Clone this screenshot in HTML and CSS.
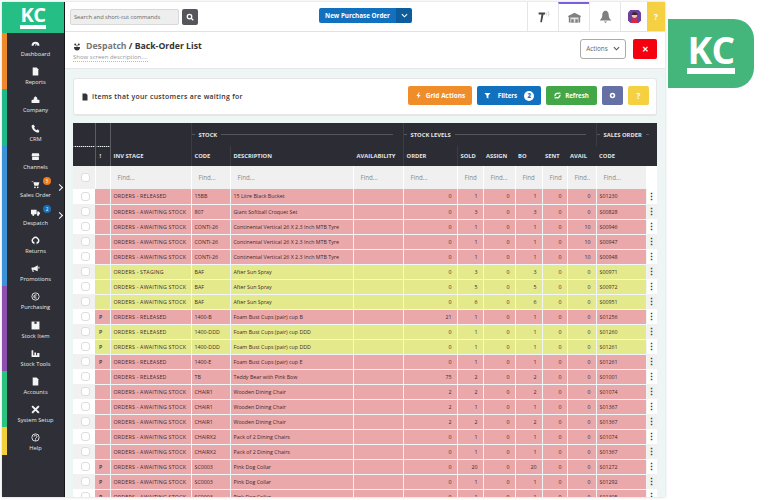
FILE: index.html
```html
<!DOCTYPE html>
<html lang="en">
<head>
    <meta charset="UTF-8">
    <title>Back-Order List</title>
    <link rel="stylesheet" href="styles.css">
</head>
<body>
    <svg class="defs" width="0" height="0">
        <symbol id="i-gauge" viewBox="0 0 16 16"><path d="M1 12a7 7 0 0 1 14 0h-3.500a3.500 3.500 0 0 0-7 0z"/><path d="M7 11l4-5-2 6z"/></symbol>
        <symbol id="i-file" viewBox="0 0 16 16"><path d="M3 1h7l3 3v11H3z"/></symbol>
        <symbol id="i-company" viewBox="0 0 16 16"><path d="M1 14V9l4-1V5l3-3 3 3v3l4 1v5z"/></symbol>
        <symbol id="i-plant" viewBox="0 0 16 16"><path d="M2 8h12c0 4-2 7-6 7s-6-3-6-7z"/><path d="M7 7V4h2v3z"/><circle cx="4.500" cy="3" r="2"/><circle cx="11.500" cy="3" r="2"/></symbol>
        <symbol id="i-phone" viewBox="0 0 16 16"><path d="M4 1l3 3.500-1.500 2c1 2 2.500 3.500 4.500 4.500l2-1.500 3 3-2 3C7 15 1 9 1 3z"/></symbol>
        <symbol id="i-shop" viewBox="0 0 16 16"><path d="M2 2h12l1 5H1zM2 8h12v6H2z"/></symbol>
        <symbol id="i-cart" viewBox="0 0 16 16"><path d="M1 2h3l.500 2H15l-2 6H6L4 3H1z"/><circle cx="7" cy="13" r="1.500"/><circle cx="12" cy="13" r="1.500"/></symbol>
        <symbol id="i-truck" viewBox="0 0 16 16"><path d="M0 3h10v8H0zM11 6h3l2 3v2h-5z"/><circle cx="4" cy="12" r="2"/><circle cx="12.500" cy="12" r="2"/></symbol>
        <symbol id="i-return" viewBox="0 0 16 16"><path d="M4 12a5.500 5.500 0 1 1 8 0" fill="none" stroke="currentColor" stroke-width="2.500"/><path d="M1 10h5v5zM15 10h-5v5z"/></symbol>
        <symbol id="i-megaphone" viewBox="0 0 16 16"><path d="M1 6h4l7-4v11L5 10H4l1 4H3l-1-4H1z"/><path d="M13 5h2v3h-2z"/></symbol>
        <symbol id="i-euro" viewBox="0 0 16 16"><circle cx="8" cy="8" r="6.500" fill="none" stroke="currentColor" stroke-width="1.500"/><path d="M10.500 5.500a3.200 3.200 0 1 0 0 5M4.500 7h4.500M4.500 9h4.500" fill="none" stroke="currentColor" stroke-width="1.200"/></symbol>
        <symbol id="i-box" viewBox="0 0 16 16"><path d="M1 1h14v14H1z"/><path d="M6 1h4v4H6z" fill="#2e2f37"/></symbol>
        <symbol id="i-chart" viewBox="0 0 16 16"><path d="M1 2h3v9h2V6h3v5h2V7h4v7H1z"/></symbol>
        <symbol id="i-tools" viewBox="0 0 16 16"><path d="M2 2l12 12M14 2L2 14" fill="none" stroke="currentColor" stroke-width="3.500"/></symbol>
        <symbol id="i-help" viewBox="0 0 16 16"><circle cx="8" cy="8" r="6.500" fill="none" stroke="currentColor" stroke-width="1.500"/><path d="M5.500 6.500a2.500 2.500 0 1 1 3.500 2.300c-.700.400-1 .700-1 1.700" fill="none" stroke="currentColor" stroke-width="1.500"/><path d="M7 11.500h2v2H7z"/></symbol>
        <symbol id="i-bolt" viewBox="0 0 16 16"><path d="M9 1L3 9h4l-1 6 7-8H8l3-6z"/></symbol>
        <symbol id="i-funnel" viewBox="0 0 16 16"><path d="M1 2h14L10 8v7l-4-2V8z"/></symbol>
        <symbol id="i-refresh" viewBox="0 0 16 16"><path d="M2.500 9.500a5.700 5.700 0 0 1 9-5.500M13.500 6.500a5.700 5.700 0 0 1-9 5.500" fill="none" stroke="currentColor" stroke-width="3"/><path d="M10 1h4.500v4.500zM6 15H1.500v-4.500z"/></symbol>
        <symbol id="i-gear" viewBox="0 0 16 16"><circle cx="8" cy="8" r="4.500" fill="none" stroke="currentColor" stroke-width="3.500"/></symbol>
        <symbol id="i-search" viewBox="0 0 16 16"><circle cx="7" cy="7" r="4.500" fill="none" stroke="currentColor" stroke-width="2.500"/><path d="M10 10l4.500 4.500" stroke="currentColor" stroke-width="2.500"/></symbol>
        <symbol id="i-chevron" viewBox="0 0 16 16"><path d="M2 5l6 6 6-6" fill="none" stroke="currentColor" stroke-width="2.500"/></symbol>
    </svg>

    <div class="page">
        <div class="app">
            <aside class="sidebar">
                <div class="brand">
                    <div class="kc kc-small"><span>KC</span><i></i></div>
                </div>
                <nav class="nav">
                    <a class="nav-item orange"><svg><use href="#i-gauge"/></svg>Dashboard</a>
                    <a class="nav-item orange"><svg><use href="#i-file"/></svg>Reports</a>
                    <a class="nav-item teal"><svg><use href="#i-company"/></svg>Company</a>
                    <a class="nav-item teal"><svg><use href="#i-phone"/></svg>CRM</a>
                    <a class="nav-item blue"><svg><use href="#i-shop"/></svg>Channels</a>
                    <a class="nav-item blue has-sub"><svg><use href="#i-cart"/></svg>Sales Order<b class="count count-orange">5</b></a>
                    <a class="nav-item blue has-sub"><svg><use href="#i-truck"/></svg>Despatch<b class="count count-blue">2</b></a>
                    <a class="nav-item blue"><svg><use href="#i-return"/></svg>Returns</a>
                    <a class="nav-item blue"><svg><use href="#i-megaphone"/></svg>Promotions</a>
                    <a class="nav-item purple"><svg><use href="#i-euro"/></svg>Purchasing</a>
                    <a class="nav-item purple"><svg><use href="#i-box"/></svg>Stock Item</a>
                    <a class="nav-item purple"><svg><use href="#i-chart"/></svg>Stock Tools</a>
                    <a class="nav-item green"><svg><use href="#i-file"/></svg>Accounts</a>
                    <a class="nav-item green"><svg><use href="#i-tools"/></svg>System Setup</a>
                    <a class="nav-item yellow"><svg><use href="#i-help"/></svg>Help</a>
                </nav>
            </aside>

            <main class="main">
                <header class="topbar">
                    <div class="search">
                        <div class="search-input">Search and short-cut commands</div>
                        <div class="search-btn"><svg><use href="#i-search"/></svg></div>
                    </div>
                    <div class="new-order">
                        <span class="new-order-label">New Purchase Order</span>
                        <span class="new-order-drop"><svg><use href="#i-chevron"/></svg></span>
                    </div>
                    <div class="tabs">
                        <div class="tab">
                            <svg viewBox="0 0 16 16"><path d="M2 3h8v2.500H8L6 15H4l1.500-9.500H2z" fill="#444"/><path d="M11.500 3a3 3 0 0 1 0 3.500M13.500 1.500a5 5 0 0 1 0 6.500" fill="none" stroke="#c4c4c4"/></svg>
                        </div>
                        <div class="tab tab-active">
                            <svg viewBox="0 0 16 16"><path d="M0 6l8-4 8 4v1h-1v7H1V7H0z" fill="#808080"/><path d="M3 8h10v6H3z" fill="#e4e4e4"/><path d="M4 10h3v4H4zM9 10h3v4H9z" fill="#808080"/></svg>
                        </div>
                        <div class="tab">
                            <svg viewBox="0 0 16 16"><path d="M8 1c3 0 4 3 4 6s2 4 3 6H1c1-2 3-3 3-6s1-6 4-6z" fill="#808080"/><path d="M6 14h4l-2 2z" fill="#808080"/></svg>
                        </div>
                        <div class="tab tab-avatar">
                            <svg viewBox="0 0 16 16"><path d="M0 3l3-3h10l3 3v10l-3 3H3l-3-3z" fill="#6f3fa0"/><circle cx="8" cy="6.500" r="3.200" fill="#f2c6a8"/><path d="M4.500 6a3.500 3.500 0 0 1 7 0z" fill="#3a2a2a"/><path d="M4 16l.500-5.500h7l.500 5.500z" fill="#d8283c"/></svg>
                        </div>
                        <div class="tab-help">?</div>
                    </div>
                </header>

                <section class="title-bar">
                    <div class="title-text">
                        <h1><svg><use href="#i-plant"/></svg><span class="crumb">Despatch</span> / Back-Order List</h1>
                        <a class="show-desc">Show screen description....</a>
                    </div>
                    <div class="actions-btn">Actions <svg><use href="#i-chevron"/></svg></div>
                    <div class="close-btn">&#10005;</div>
                </section>

                <section class="content">
                    <div class="card">
                        <svg class="card-icon"><use href="#i-file"/></svg>
                        <span class="card-text">Items that your customers are waiting for</span>
                        <div class="card-buttons">
                            <div class="btn btn-orange btn-grid"><svg><use href="#i-bolt"/></svg>Grid Actions</div>
                            <div class="btn btn-blue btn-filters"><svg><use href="#i-funnel"/></svg>Filters<b class="filter-count">2</b></div>
                            <div class="btn btn-green btn-refresh"><svg><use href="#i-refresh"/></svg>Refresh</div>
                            <div class="btn btn-slate btn-square"><svg><use href="#i-gear"/></svg></div>
                            <div class="btn btn-yellow btn-square">?</div>
                        </div>
                    </div>

                    <table class="grid">
                        <colgroup>
                            <col class="c-check"><col class="c-flag"><col class="c-stage"><col class="c-code"><col class="c-desc"><col class="c-avail"><col class="c-order"><col class="c-sold"><col class="c-assign"><col class="c-bo"><col class="c-sent"><col class="c-free"><col class="c-so"><col class="c-menu">
                        </colgroup>
                        <thead>
                            <tr class="group-row">
                                <th class="dash"></th>
                                <th class="dash"></th>
                                <th></th>
                                <th colspan="3"><div class="group"><i class="short"></i><span>STOCK</span><i></i></div></th>
                                <th colspan="6"><div class="group"><i class="short"></i><span>STOCK LEVELS</span><i></i></div></th>
                                <th colspan="2"><div class="group"><i class="short"></i><span>SALES ORDER</span><i class="short"></i></div></th>
                            </tr>
                            <tr class="head-row">
                                <th></th><th class="bang">!</th><th>INV STAGE</th><th>CODE</th><th>DESCRIPTION</th><th>AVAILABILITY</th><th>ORDER</th><th>SOLD</th><th>ASSIGN</th><th>BO</th><th>SENT</th><th>AVAIL</th><th>CODE</th><th></th>
                            </tr>
                            <tr class="find-row">
                                <td><span class="check"></span></td><td></td><td>Find...</td><td>Find...</td><td>Find...</td><td>Find...</td><td>Find...</td><td>Find</td><td>Find...</td><td>Find</td><td>Find</td><td>Find..</td><td>Find...</td><td class="menu"></td>
                            </tr>
                        </thead>
                        <tbody>
                            <tr class="red"><td><span class="check"></span></td><td></td><td>ORDERS - RELEASED</td><td>15BB</td><td>15 Litre Black Bucket</td><td></td><td>0</td><td>1</td><td>0</td><td>1</td><td>0</td><td>0</td><td>S01230</td><td class="menu">&#8942;</td></tr>
                            <tr class="red"><td><span class="check"></span></td><td></td><td>ORDERS - AWAITING STOCK</td><td>807</td><td>Giant Softball Croquet Set</td><td></td><td>0</td><td>3</td><td>0</td><td>3</td><td>0</td><td>0</td><td>S00828</td><td class="menu">&#8942;</td></tr>
                            <tr class="red"><td><span class="check"></span></td><td></td><td>ORDERS - AWAITING STOCK</td><td>CONTI-26</td><td>Continental Vertical 26 X 2.3 Inch MTB Tyre</td><td></td><td>0</td><td>1</td><td>0</td><td>1</td><td>0</td><td>10</td><td>S00946</td><td class="menu">&#8942;</td></tr>
                            <tr class="red"><td><span class="check"></span></td><td></td><td>ORDERS - AWAITING STOCK</td><td>CONTI-26</td><td>Continental Vertical 26 X 2.3 Inch MTB Tyre</td><td></td><td>0</td><td>1</td><td>0</td><td>1</td><td>0</td><td>10</td><td>S00947</td><td class="menu">&#8942;</td></tr>
                            <tr class="red"><td><span class="check"></span></td><td></td><td>ORDERS - AWAITING STOCK</td><td>CONTI-26</td><td>Continental Vertical 26 X 2.3 Inch MTB Tyre</td><td></td><td>0</td><td>1</td><td>0</td><td>1</td><td>0</td><td>10</td><td>S00948</td><td class="menu">&#8942;</td></tr>
                            <tr class="lime"><td><span class="check"></span></td><td></td><td>ORDERS - STAGING</td><td>BAF</td><td>After Sun Spray</td><td></td><td>0</td><td>3</td><td>0</td><td>3</td><td>0</td><td>0</td><td>S00971</td><td class="menu">&#8942;</td></tr>
                            <tr class="lime"><td><span class="check"></span></td><td></td><td>ORDERS - AWAITING STOCK</td><td>BAF</td><td>After Sun Spray</td><td></td><td>0</td><td>5</td><td>0</td><td>5</td><td>0</td><td>0</td><td>S00972</td><td class="menu">&#8942;</td></tr>
                            <tr class="lime"><td><span class="check"></span></td><td></td><td>ORDERS - AWAITING STOCK</td><td>BAF</td><td>After Sun Spray</td><td></td><td>0</td><td>6</td><td>0</td><td>6</td><td>0</td><td>0</td><td>S00951</td><td class="menu">&#8942;</td></tr>
                            <tr class="red"><td><span class="check"></span></td><td>P</td><td>ORDERS - RELEASED</td><td>1400-B</td><td>Foam Bust Cups (pair) cup B</td><td></td><td>21</td><td>1</td><td>0</td><td>1</td><td>0</td><td>0</td><td>S01256</td><td class="menu">&#8942;</td></tr>
                            <tr class="lime"><td><span class="check"></span></td><td>P</td><td>ORDERS - RELEASED</td><td>1400-DDD</td><td>Foam Bust Cups (pair) cup DDD</td><td></td><td>0</td><td>1</td><td>0</td><td>1</td><td>0</td><td>0</td><td>S01260</td><td class="menu">&#8942;</td></tr>
                            <tr class="lime"><td><span class="check"></span></td><td>P</td><td>ORDERS - AWAITING STOCK</td><td>1400-DDD</td><td>Foam Bust Cups (pair) cup DDD</td><td></td><td>0</td><td>1</td><td>0</td><td>1</td><td>0</td><td>0</td><td>S01261</td><td class="menu">&#8942;</td></tr>
                            <tr class="red"><td><span class="check"></span></td><td>P</td><td>ORDERS - RELEASED</td><td>1400-E</td><td>Foam Bust Cups (pair) cup E</td><td></td><td>0</td><td>1</td><td>0</td><td>1</td><td>0</td><td>0</td><td>S01261</td><td class="menu">&#8942;</td></tr>
                            <tr class="red"><td><span class="check"></span></td><td></td><td>ORDERS - RELEASED</td><td>TB</td><td>Teddy Bear with Pink Bow</td><td></td><td>75</td><td>2</td><td>0</td><td>2</td><td>0</td><td>0</td><td>S01001</td><td class="menu">&#8942;</td></tr>
                            <tr class="red"><td><span class="check"></span></td><td></td><td>ORDERS - AWAITING STOCK</td><td>CHAIR1</td><td>Wooden Dining Chair</td><td></td><td>2</td><td>2</td><td>0</td><td>2</td><td>0</td><td>0</td><td>S01074</td><td class="menu">&#8942;</td></tr>
                            <tr class="red"><td><span class="check"></span></td><td></td><td>ORDERS - AWAITING STOCK</td><td>CHAIR1</td><td>Wooden Dining Chair</td><td></td><td>2</td><td>1</td><td>0</td><td>1</td><td>0</td><td>0</td><td>S01367</td><td class="menu">&#8942;</td></tr>
                            <tr class="red"><td><span class="check"></span></td><td></td><td>ORDERS - AWAITING STOCK</td><td>CHAIR1</td><td>Wooden Dining Chair</td><td></td><td>2</td><td>2</td><td>0</td><td>2</td><td>0</td><td>0</td><td>S01367</td><td class="menu">&#8942;</td></tr>
                            <tr class="red"><td><span class="check"></span></td><td></td><td>ORDERS - AWAITING STOCK</td><td>CHAIRX2</td><td>Pack of 2 Dining Chairs</td><td></td><td>0</td><td>1</td><td>0</td><td>1</td><td>0</td><td>0</td><td>S01074</td><td class="menu">&#8942;</td></tr>
                            <tr class="red"><td><span class="check"></span></td><td></td><td>ORDERS - AWAITING STOCK</td><td>CHAIRX2</td><td>Pack of 2 Dining Chairs</td><td></td><td>0</td><td>1</td><td>0</td><td>1</td><td>0</td><td>0</td><td>S01367</td><td class="menu">&#8942;</td></tr>
                            <tr class="red"><td><span class="check"></span></td><td>P</td><td>ORDERS - AWAITING STOCK</td><td>SC0003</td><td>Pink Dog Collar</td><td></td><td>0</td><td>20</td><td>0</td><td>20</td><td>0</td><td>0</td><td>S01272</td><td class="menu">&#8942;</td></tr>
                            <tr class="red"><td><span class="check"></span></td><td>P</td><td>ORDERS - AWAITING STOCK</td><td>SC0003</td><td>Pink Dog Collar</td><td></td><td>0</td><td>1</td><td>0</td><td>1</td><td>0</td><td>0</td><td>S01292</td><td class="menu">&#8942;</td></tr>
                            <tr class="red"><td><span class="check"></span></td><td>P</td><td>ORDERS - AWAITING STOCK</td><td>SC0003</td><td>Pink Dog Collar</td><td></td><td>0</td><td>1</td><td>0</td><td>1</td><td>0</td><td>0</td><td>S01305</td><td class="menu">&#8942;</td></tr>
                        </tbody>
                    </table>
                </section>
            </main>
        </div>

        <div class="badge">
            <div class="kc kc-large"><span>KC</span><i></i></div>
        </div>
    </div>
</body>
</html>
```

FILE: styles.css
```css
* {
    box-sizing: border-box;
}
html, body {
    margin: 0;
    padding: 0;
    background-color: #ffffff;
    overflow: hidden;
}
body {
    font-family: "Open Sans", "Liberation Sans", sans-serif;
    color: #333333;
}
.defs {
    display: block;
    height: 0;
}
.page {
    display: flex;
    align-items: flex-start;
    width: 784px;
    height: 500px;
    padding: 2px 0 0 2px;
    overflow: hidden;
}
.app {
    display: flex;
    flex: none;
    width: 663px;
    height: 495px;
    overflow: hidden;
    box-shadow: 0 0 3px rgba(0, 0, 0, 0.2);
}

/* big logo on the right */
.badge {
    flex: none;
    display: flex;
    align-items: center;
    justify-content: center;
    width: 86px;
    height: 69px;
    margin: 17px 0 0 3px;
    background-color: #44b67b;
    border-radius: 0 20px 20px 0;
}
.kc {
    display: flex;
    flex-direction: column;
    align-items: stretch;
    color: #ffffff;
    font-weight: 700;
}
.kc span {
    display: block;
}
.kc i {
    display: block;
    background-color: #ffffff;
}
.kc-large span {
    font-size: 37px;
    line-height: 31px;
    letter-spacing: -0.5px;
}
.kc-large i {
    height: 6px;
    margin-top: 3px;
}
.kc-small span {
    font-size: 20px;
    line-height: 17px;
    letter-spacing: -0.5px;
}
.kc-small i {
    height: 4px;
    margin-top: 2px;
}

/* sidebar */
.sidebar {
    flex: none;
    width: 63px;
    background-color: #2e2f37;
    border-right: 1px solid #16161a;
}
.brand {
    display: flex;
    align-items: center;
    justify-content: center;
    height: 31px;
    background-color: #25bf85;
}
.nav-item {
    position: relative;
    display: flex;
    flex-direction: column;
    align-items: center;
    justify-content: flex-end;
    height: 28.15px;
    padding-bottom: 3px;
    border-left: 5px solid #2e2f37;
    color: #e8e8e8;
    font-size: 5.7px;
    line-height: 8px;
}
.nav-item svg {
    width: 9px;
    height: 9px;
    margin-bottom: 2px;
    fill: #f4f4f4;
    color: #f4f4f4;
}
.orange { border-left-color: #ef8a2a; }
.teal { border-left-color: #1fb98a; }
.blue { border-left-color: #3b92d8; }
.purple { border-left-color: #8e4fb0; }
.green { border-left-color: #2cc27f; }
.yellow { border-left-color: #f4cf3c; }
.has-sub::after {
    content: "";
    position: absolute;
    right: 2px;
    top: 11px;
    width: 4px;
    height: 4px;
    border-top: 1.5px solid #ffffff;
    border-right: 1.5px solid #ffffff;
    transform: rotate(45deg);
}
.count {
    position: absolute;
    top: 3px;
    left: 36px;
    width: 8px;
    height: 8px;
    border-radius: 50%;
    color: #ffffff;
    font-size: 4.5px;
    font-weight: 400;
    line-height: 8px;
    text-align: center;
}
.count-orange { background-color: #f07a1e; }
.count-blue { background-color: #1671b8; }

/* main column */
.main {
    flex: 1;
    min-width: 0;
    display: flex;
    flex-direction: column;
    background-color: #eef5f5;
}
.topbar {
    flex: none;
    display: flex;
    align-items: center;
    height: 30px;
    padding-left: 5px;
    background-color: #ffffff;
    border-bottom: 1px solid #e2e2e2;
}
.search {
    display: flex;
    align-items: center;
    gap: 3px;
    width: 249px;
}
.search-input {
    width: 109px;
    height: 16px;
    padding-left: 3px;
    background-color: #eeeeee;
    border: 1px solid #d8d8d8;
    border-radius: 2px;
    color: #666666;
    font-size: 5.7px;
    line-height: 14px;
}
.search-btn {
    display: flex;
    align-items: center;
    justify-content: center;
    width: 16px;
    height: 16px;
    background-color: #55565c;
    border-radius: 2px;
}
.search-btn svg {
    width: 8px;
    height: 8px;
    color: #ffffff;
}
.new-order {
    display: flex;
    height: 15px;
    margin-top: -2px;
    color: #ffffff;
    font-size: 6.3px;
    font-weight: 700;
    line-height: 15px;
}
.new-order-label {
    width: 77px;
    text-align: center;
    background-color: #1171bf;
    border-radius: 2px 0 0 2px;
}
.new-order-drop {
    display: flex;
    align-items: center;
    justify-content: center;
    width: 16px;
    background-color: #0c5c9e;
    border-radius: 0 2px 2px 0;
}
.new-order-drop svg {
    width: 7px;
    height: 7px;
    color: #ffffff;
}
.tabs {
    display: flex;
    align-self: stretch;
    margin-left: auto;
}
.tab {
    display: flex;
    align-items: center;
    justify-content: center;
    width: 31px;
    border-left: 1px solid #e6e6e6;
}
.tab svg {
    width: 13px;
    height: 13px;
}
.tab-active {
    border-top: 2px solid #7c5ce0;
}
.tab-avatar {
    width: 27px;
}
.tab-help {
    width: 18px;
    background-color: #f5d043;
    color: #ffffff;
    font-size: 8px;
    font-weight: 700;
    line-height: 30px;
    text-align: center;
}

/* title */
.title-bar {
    flex: none;
    display: flex;
    align-items: center;
    height: 37px;
    padding: 0 8px 0 8px;
    background-color: #ffffff;
    border-bottom: 1px solid #e6e6e6;
}
.title-text {
    flex: 1;
    padding-top: 2px;
}
h1 {
    display: flex;
    align-items: center;
    margin: 0;
    color: #333333;
    font-size: 8.7px;
    font-weight: 700;
    line-height: 13px;
    white-space: pre;
}
h1 svg {
    width: 8px;
    height: 8px;
    margin-right: 5px;
    fill: #333333;
}
.crumb {
    color: #777777;
}
.show-desc {
    display: block;
    width: fit-content;
    color: #999999;
    font-size: 6px;
    line-height: 8px;
    border-bottom: 1px dotted #bbbbbb;
}
.actions-btn {
    display: flex;
    align-items: center;
    justify-content: center;
    gap: 5px;
    width: 46px;
    height: 20px;
    margin: 0 7px 3px 0;
    background-color: #ffffff;
    border: 1px solid #aaaaaa;
    border-radius: 3px;
    color: #666666;
    font-size: 6.3px;
}
.actions-btn svg {
    width: 7px;
    height: 7px;
    color: #555555;
}
.close-btn {
    width: 24px;
    height: 20px;
    margin-bottom: 3px;
    background-color: #f5000f;
    border-radius: 2px;
    color: #ffffff;
    font-size: 8px;
    font-weight: 700;
    line-height: 20px;
    text-align: center;
}

/* content */
.content {
    flex: 1;
    min-height: 0;
    padding: 9px 8px 0 8px;
    overflow: hidden;
}
.card {
    display: flex;
    align-items: center;
    height: 38px;
    padding: 0 7px 0 7px;
    background-color: #ffffff;
    border: 1px solid #e6e6e6;
    border-bottom-width: 2px;
    border-radius: 3px;
}
.card-icon {
    width: 8px;
    height: 8px;
    margin-right: 3px;
    fill: #333333;
}
.card-text {
    font-size: 6.9px;
    font-weight: 600;
    letter-spacing: 0.3px;
}
.card-buttons {
    display: flex;
    gap: 5px;
    margin: 0 0 2px auto;
}
.btn {
    display: flex;
    align-items: center;
    justify-content: center;
    gap: 4px;
    height: 19px;
    border-radius: 2px;
    color: #ffffff;
    font-size: 6.2px;
    font-weight: 700;
}
.btn svg {
    width: 7px;
    height: 7px;
    fill: #ffffff;
    color: #ffffff;
}
.btn-grid { width: 64px; font-size: 6.5px; }
.btn-filters { width: 64px; gap: 7px; }
.btn-refresh { width: 51px; }
.btn-square { width: 21px; font-size: 8px; }
.btn-orange { background-color: #f08d2b; }
.btn-blue { background-color: #1171bf; }
.btn-green { background-color: #43a647; }
.btn-slate { background-color: #6570a5; }
.btn-yellow { background-color: #f5d043; }
.filter-count {
    width: 10px;
    height: 10px;
    border-radius: 50%;
    background-color: #ffffff;
    color: #1171bf;
    font-size: 6px;
    line-height: 10px;
    text-align: center;
}

/* grid */
.grid {
    width: 584px;
    margin-top: 7px;
    border-collapse: collapse;
    table-layout: fixed;
    font-size: 5.3px;
}
.c-check { width: 22px; }
.c-flag { width: 15px; }
.c-stage { width: 81px; }
.c-code { width: 39px; }
.c-desc { width: 123px; }
.c-avail { width: 50px; }
.c-order { width: 54px; }
.c-sold { width: 26px; }
.c-assign { width: 32px; }
.c-bo { width: 27px; }
.c-sent { width: 25px; }
.c-free { width: 29px; }
.c-so { width: 50px; }
.c-menu { width: 11px; }
th, td {
    padding: 0 0 0 3px;
    overflow: hidden;
    white-space: nowrap;
    text-align: left;
}
thead tr.group-row, thead tr.head-row {
    background-color: #2b2c34;
    color: #e4e4e4;
}
th {
    font-size: 5.8px;
    font-weight: 700;
}
.group-row th {
    height: 23px;
    padding: 0;
}
.head-row th {
    height: 20px;
}
.group-row th:nth-child(-n+5), .head-row th:nth-child(-n+7) {
    border-right: 1px solid #3b3c45;
}
.head-row th:nth-child(5) {
    border-right-color: #2b2c34;
}
.group-row th:nth-child(1), .group-row th:nth-child(2),
.head-row th:nth-child(1), .head-row th:nth-child(2) {
    border-right: 1px solid #5a5b63;
}
.group-row th.dash {
    border-bottom: 1px dotted #6a6b73;
}
.bang {
    text-align: left;
    padding-left: 4px;
}
.group {
    display: flex;
    align-items: center;
    gap: 4px;
    padding-right: 10px;
}
.group i {
    flex: 1;
    height: 1px;
    background-color: #55565e;
}
.group i.short {
    flex: none;
    width: 3px;
}
.find-row td {
    height: 23px;
    padding-left: 7px;
    background-color: #f0f0f0;
    border-right: 1px solid #ffffff;
    color: #8a8a8a;
    font-size: 6.2px;
}
.find-row td.menu {
    background-color: #ffffff;
    border-right: none;
}
tbody td {
    height: 15px;
    color: #40292b;
    border-right: 1px solid rgba(255, 255, 255, 0.15);
    border-bottom: 1px solid rgba(255, 255, 255, 0.2);
}
.red td {
    background-color: #eba8aa;
}
.lime td {
    background-color: #e4ea8c;
}
tbody td:nth-child(3) {
    letter-spacing: 0.2px;
}
tbody td:nth-child(n+7):nth-child(-n+12) {
    padding: 0 5px 0 0;
    text-align: right;
}
tbody td:nth-child(8) {
    padding-right: 4px;
}
tbody td:first-child, tbody td:last-child {
    background-color: #ffffff;
    border: none;
}
tbody tr:nth-child(even) td:first-child,
tbody tr:nth-child(even) td:last-child {
    background-color: #f1f1f1;
}
tbody td:nth-child(2) {
    padding: 0 0 0 4px;
    font-weight: 600;
}
td:first-child, .find-row td:first-child {
    padding: 0 0 0 8px;
}
.check {
    display: block;
    width: 9px;
    height: 9px;
    background-color: #ffffff;
    border: 1px solid #dddddd;
    border-radius: 3px;
}
tbody td.menu {
    padding: 0;
    color: #333333;
    font-size: 9px;
    font-weight: 700;
    line-height: 14px;
    text-align: center;
}
```
